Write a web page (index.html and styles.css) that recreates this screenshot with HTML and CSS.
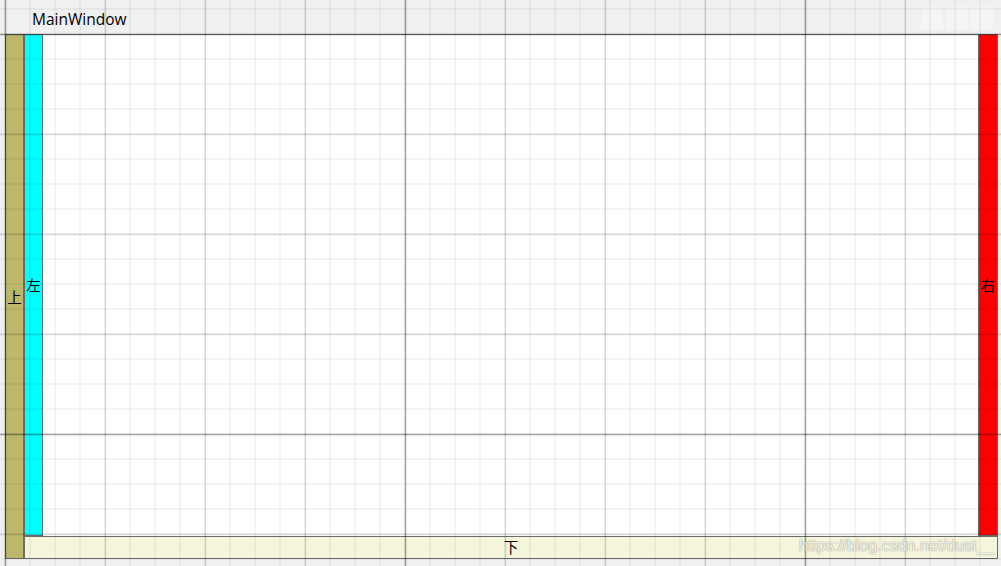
FILE: index.html
```html
<!DOCTYPE html>
<html>
<head>
<meta charset="utf-8">
<title>MainWindow</title>
<link rel="stylesheet" href="styles.css">
</head>
<body>
<div class="page">
  <div class="titlebar">
    <span class="title">MainWindow</span>
    <div class="caption-btns"><span></span><span></span><span></span></div>
  </div>
  <div class="window">
    <div class="dock dock-top">上</div>
    <div class="dock dock-left">左</div>
    <div class="center"></div>
    <div class="dock dock-right">右</div>
    <div class="dock dock-bottom">下</div>
  </div>
  <div class="grid-overlay"></div>
  <div class="watermark">https://blog.csdn.net/dust__</div>
</div>
</body>
</html>
```
FILE: styles.css
```css
* { box-sizing: border-box; }
html, body { margin: 0; padding: 0; }
body { background: #f0f0f0; }

.page {
  position: relative;
  width: 1001px;
  height: 566px;
  overflow: hidden;
  background: #f0f0f0;
  font-family: "Noto Sans CJK SC", "Noto Sans", sans-serif;
}

.titlebar {
  height: 34px;
  display: flex;
  align-items: center;
  justify-content: space-between;
  padding-left: 32px;
  padding-right: 8px;
}
.title {
  font-family: "Open Sans", "Noto Sans", sans-serif;
  font-size: 15.5px;
  color: #000;
  line-height: 20px;
  margin-top: 3px;
}
.caption-btns {
  display: flex;
  gap: 3px;
  align-self: flex-start;
  margin-top: 7px;
}
.caption-btns span {
  width: 22px;
  height: 23px;
  background: rgba(255, 255, 255, 0.35);
}

.window {
  margin-left: 5px;
  width: 993px;
  height: 525px;
  display: grid;
  grid-template-columns: 19px 19px 1fr 20px;
  grid-template-rows: 502px 23px;
}

.dock {
  border: 1px solid #6b6b6b;
  display: flex;
  align-items: center;
  justify-content: center;
  font-size: 14.5px;
  color: #000;
  line-height: 1;
}
.dock-top {
  grid-column: 1;
  grid-row: 1 / 3;
  background: #bdb76b;
  padding-top: 1px;
}
.dock-left {
  grid-column: 2;
  grid-row: 1;
  background: #00ffff;
}
.center {
  grid-column: 3;
  grid-row: 1;
  background: #ffffff;
  border-top: 1px solid #8a8a8a;
}
.dock-right {
  grid-column: 4;
  grid-row: 1;
  background: #ff0000;
}
.dock-bottom {
  grid-column: 2 / 5;
  grid-row: 2;
  background: #f5f5dc;
}

.grid-overlay {
  position: absolute;
  inset: 0;
  pointer-events: none;
  background-image:
    linear-gradient(to right, rgba(0,0,0,0.07) 1px, rgba(0,0,0,0.24) 1px 2px, rgba(0,0,0,0.07) 2px 3px, transparent 3px),
    linear-gradient(to bottom, rgba(0,0,0,0.07) 1px, rgba(0,0,0,0.24) 1px 2px, rgba(0,0,0,0.07) 2px 3px, transparent 3px),
    linear-gradient(to right, rgba(0,0,0,0.03) 1px, rgba(0,0,0,0.12) 1px 2px, rgba(0,0,0,0.03) 2px 3px, transparent 3px),
    linear-gradient(to bottom, rgba(0,0,0,0.03) 1px, rgba(0,0,0,0.12) 1px 2px, rgba(0,0,0,0.03) 2px 3px, transparent 3px),
    linear-gradient(to right, rgba(0,0,0,0.045) 2px, transparent 2px),
    linear-gradient(to bottom, rgba(0,0,0,0.045) 2px, transparent 2px);
  background-size:
    400px 100%,
    100% 400px,
    100px 100%,
    100% 100px,
    25px 100%,
    100% 25px;
  background-position:
    4px 0,
    0 33px,
    4px 0,
    0 33px,
    4px 0,
    0 8px;
}

.watermark {
  position: absolute;
  left: 799px;
  top: 537px;
  font-family: "Liberation Sans", Arial, sans-serif;
  font-size: 16px;
  line-height: 18px;
  color: rgba(255, 255, 255, 0.9);
  text-shadow: 0 0 1px rgba(0, 0, 0, 0.45), 0 0 2px rgba(0, 0, 0, 0.15);
  pointer-events: none;
}
```
